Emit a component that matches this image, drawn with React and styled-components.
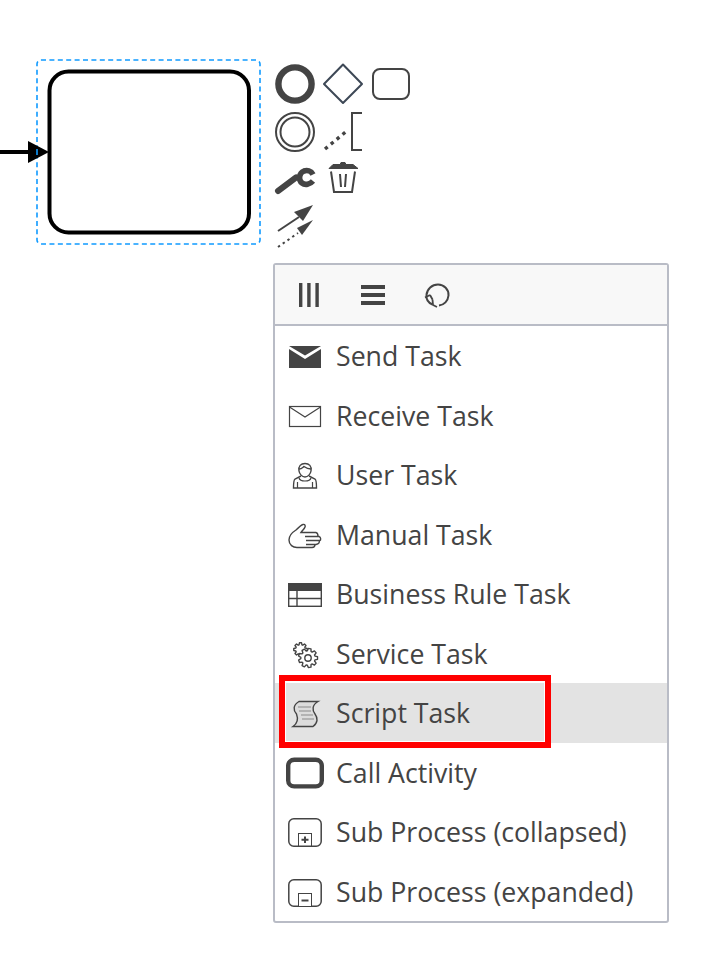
import React from 'react';
import styled, { createGlobalStyle } from 'styled-components';

const GlobalStyle = createGlobalStyle`
  html, body {
    margin: 0;
    background: #fff;
  }
  body {
    font-family: "Open Sans", "Noto Sans", sans-serif;
    color: #444;
  }
`;

const Page = styled.div`
  width: 703px;
  height: 961px;
  overflow: hidden;
`;

const Stage = styled.div`
  display: flex;
  align-items: flex-start;
  height: 263px;
`;

const Diagram = styled.svg`
  display: block;
  flex: none;
  width: 271px;
  height: 263px;
`;

const ContextPad = styled.div`
  display: grid;
  grid-template-columns: repeat(3, 48px);
  grid-auto-rows: 48px;
  margin-top: 60px;
`;

const PadIcon = styled.svg`
  display: block;
  width: 48px;
  height: 48px;
  color: #444;
`;

const Menu = styled.div`
  box-sizing: border-box;
  width: 396px;
  margin-left: 273px;
  border: 2px solid #b9bcc6;
  border-radius: 3px;
  background: #fff;
`;

const MenuHeader = styled.div`
  display: flex;
  align-items: center;
  height: 59px;
  padding-left: 14px;
  gap: 24px;
  background: #f8f8f8;
  border-bottom: 2px solid #b9bcc6;
`;

const HeaderIcon = styled.svg`
  display: block;
  width: 40px;
  height: 40px;
  color: #444;
`;

const Row = styled.div`
  position: relative;
  display: flex;
  align-items: center;
  gap: 11px;
  height: 59.5px;
  padding-left: 10px;
  font-size: 26.7px;
  white-space: nowrap;
  background: ${(p) => (p.$active ? '#e3e3e3' : 'transparent')};
`;

const RowIcon = styled.svg`
  display: block;
  flex: none;
  width: 40px;
  height: 40px;
  color: #444;
`;

const Callout = styled.div`
  position: absolute;
  left: 4px;
  top: -8px;
  width: 272px;
  height: 73px;
  box-sizing: border-box;
  border: 6px solid #ff0000;
  box-shadow: inset 0 0 0 1px #fff;
`;

function gearPath(cx, cy, outer, inner, teeth) {
  const step = (Math.PI * 2) / teeth;
  const pts = [];
  for (let i = 0; i < teeth; i++) {
    const a = i * step;
    const at = (r, o) => `${(cx + r * Math.cos(a + o)).toFixed(2)} ${(cy + r * Math.sin(a + o)).toFixed(2)}`;
    pts.push(at(inner, -step * 0.38), at(outer, -step * 0.2), at(outer, step * 0.2), at(inner, step * 0.38));
  }
  return `M${pts.join('L')}Z`;
}

const rowBox = { viewBox: '-3 -3 40 40', fill: 'none', stroke: 'currentColor' };

const icons = {
  send: (
    <RowIcon {...rowBox} stroke="none">
      <path d="M1 7H33L17 16.5Z M1 10L17 20L33 10V29H1Z" fill="currentColor" />
    </RowIcon>
  ),
  receive: (
    <RowIcon {...rowBox} strokeWidth="1.2">
      <rect x="1.5" y="8.5" width="31" height="20" />
      <path d="M1.5 9L17 19L32.5 9" />
    </RowIcon>
  ),
  user: (
    <RowIcon {...rowBox} strokeWidth="1.4">
      <path d="M11 13C10 8 13 5.5 17 5.5C21 5.5 24 8 23 13C22.5 16 20 19 17 19C14 19 11.5 16 11 13Z" />
      <path d="M11 11C14 11 15 9 16 8.5C18 10 21 11 23 11" />
      <path d="M13 18L7 21C5.5 22 5.5 24 5.5 30H28.5C28.5 24 28.5 22 27 21L21 18" />
      <path d="M11 20C12 24 22 24 23 20M9.5 24V30M24.5 24V30" strokeWidth="1.2" />
    </RowIcon>
  ),
  manual: (
    <RowIcon {...rowBox} strokeWidth="1.4">
      <path d="M15 7.5C13 8 10 11 8 13C4 15.5 1 19 1 23C1 28 5 30.5 9 30.5H24" />
      <path d="M15 7.5C17 7 18 9 16.5 11C15.5 12.5 14 14 13 15.5H28" />
      <path d="M17 19.5H31.5M18 23.5H32M18 27.5H28M28 15.5C30 16 30 19 30 19.5M31 19.5C33 20 33 23 32 23.5M31 23.5C32 25 31 27 28 27.5M24 30.5C26 30.5 27 29 27 27.5" />
    </RowIcon>
  ),
  rule: (
    <RowIcon {...rowBox} strokeWidth="1.4">
      <rect x="0.5" y="6" width="33" height="8" fill="currentColor" stroke="none" />
      <rect x="0.7" y="6.7" width="32.6" height="22.6" />
      <path d="M0.7 21.5H33.3M9 14V29.3" />
    </RowIcon>
  ),
  service: (
    <RowIcon {...rowBox} strokeWidth="1.4" strokeLinejoin="round">
      <path d={gearPath(12.5, 13.5, 6.8, 4.9, 8)} />
      <path d={gearPath(20, 22, 9.6, 7.2, 9)} fill="#fff" />
      <circle cx="20" cy="22" r="3.2" />
    </RowIcon>
  ),
  script: (
    <RowIcon {...rowBox} strokeWidth="1.4">
      <path d="M11 5.5H30C24 9 24 14 27 18C30 22 30 27 25 30.5H5C10 27 10 22 8.5 18C5 14 5 9 11 5.5Z" fill="#dcdcdc" />
      <path d="M10 11H23M11 15H23M13 19H25M14 23H26" stroke="#8a8a8a" strokeWidth="1" />
    </RowIcon>
  ),
  call: (
    <RowIcon {...rowBox} strokeWidth="4.4">
      <rect x="0.2" y="4.8" width="33.6" height="26.6" rx="6" />
    </RowIcon>
  ),
  collapsed: (
    <RowIcon {...rowBox} strokeWidth="1.5">
      <rect x="0.8" y="3.8" width="32.4" height="27.4" rx="5" />
      <rect x="10.5" y="18.5" width="13" height="12.5" strokeWidth="1" fill="#fff" />
      <path d="M13.5 24.8H20.5M17 21.5V28" strokeWidth="2" />
    </RowIcon>
  ),
  expanded: (
    <RowIcon {...rowBox} strokeWidth="1.5">
      <rect x="0.8" y="5.8" width="32.4" height="26.4" rx="5" />
      <rect x="10.5" y="19.5" width="13" height="13" strokeWidth="1" fill="#fff" />
      <path d="M13.5 26.5H20.5" strokeWidth="2" />
    </RowIcon>
  ),
};

const rows = [
  { key: 'send', label: 'Send Task' },
  { key: 'receive', label: 'Receive Task' },
  { key: 'user', label: 'User Task' },
  { key: 'manual', label: 'Manual Task' },
  { key: 'rule', label: 'Business Rule Task' },
  { key: 'service', label: 'Service Task' },
  { key: 'script', label: 'Script Task', active: true },
  { key: 'call', label: 'Call Activity' },
  { key: 'collapsed', label: 'Sub Process (collapsed)' },
  { key: 'expanded', label: 'Sub Process (expanded)' },
];

const padBox = { viewBox: '0 0 48 48', fill: 'none', stroke: 'currentColor' };

function Pad() {
  return (
    <ContextPad>
      <PadIcon {...padBox} strokeWidth="6.4">
        <circle cx="24" cy="24" r="16.6" />
      </PadIcon>
      <PadIcon {...padBox} strokeWidth="2" strokeLinejoin="round" stroke="#3d4856">
        <path d="M24 4.5L43 24L24 43L5 24Z" />
      </PadIcon>
      <PadIcon {...padBox} strokeWidth="2">
        <rect x="6" y="9" width="36" height="30" rx="7" />
      </PadIcon>

      <PadIcon {...padBox} strokeWidth="2">
        <circle cx="24" cy="24" r="19" />
        <circle cx="24" cy="24" r="14.5" />
      </PadIcon>
      <PadIcon {...padBox}>
        <path d="M6 41L29 22" strokeWidth="3.4" strokeDasharray="3.4 4.2" />
        <path d="M43 5H33V42H43" strokeWidth="2" />
      </PadIcon>
      <span />

      <PadIcon {...padBox} strokeLinecap="round">
        <path d="M7 35L25 21.5" strokeWidth="6" />
        <path d="M42 18.5C40 14.5 36 14 33 15C28 17 27 24 31 27C34 29.5 39 28.5 42 25" strokeWidth="5.6" strokeLinecap="butt" />
      </PadIcon>
      <PadIcon {...padBox}>
        <path d="M10 12.5H39L34 8.5H27L26 6.5H22L21 8.5H14Z" fill="currentColor" stroke="currentColor" strokeWidth="1" strokeLinejoin="round" />
        <path d="M12 15.5L15 36H33L36 15.5" strokeWidth="2" />
        <path d="M21 18L22 31M27 18L26 31" strokeWidth="2" />
      </PadIcon>
      <span />

      <PadIcon {...padBox}>
        <path d="M7 27L28 13" strokeWidth="2" />
        <path d="M23 8L42 1L32 17Z" fill="currentColor" stroke="none" />
        <path d="M7 43L27 29" strokeWidth="2" strokeDasharray="2.4 3.4" />
        <path d="M26 24L42 16L31 31Z" fill="currentColor" stroke="none" />
      </PadIcon>
    </ContextPad>
  );
}

export default function App() {
  return (
    <Page>
      <GlobalStyle />
      <Stage>
        <Diagram viewBox="0 0 271 263" fill="none">
          <rect x="37" y="60" width="223" height="184" rx="4" stroke="#0f9aff" strokeWidth="1.6" strokeDasharray="5 3.4" />
          <rect x="49.5" y="71.5" width="199.5" height="161" rx="19" fill="#fff" stroke="#000" strokeWidth="4" />
          <path d="M0 152H30" stroke="#000" strokeWidth="4" />
          <path d="M28 141L49 152L28 163Z" fill="#000" />
          <path d="M37 149V155" stroke="#0f9aff" strokeWidth="1.6" />
        </Diagram>
        <Pad />
      </Stage>
      <Menu>
        <MenuHeader>
          <HeaderIcon viewBox="0 0 40 40" fill="currentColor">
            <path d="M10 8H13.4V32H10ZM18.2 8H21.6V32H18.2ZM26.4 8H29.8V32H26.4Z" />
          </HeaderIcon>
          <HeaderIcon viewBox="0 0 40 40" fill="currentColor">
            <path d="M8 10H32V14H8ZM8 18H32V22H8ZM8 26H32V30H8Z" />
          </HeaderIcon>
          <HeaderIcon viewBox="0 0 40 40" fill="none" stroke="currentColor" strokeWidth="2">
            <path d="M15.5 29.5C11 27.5 9 24 9.5 20C10 14 15 9.5 21 9.5C27 9.5 32 14.5 31.5 20.5C31 26 27 30 22 30.5" />
            <path d="M8 22.5L13 20M13 20L15.5 24.5M15.5 24.5L16 30L20 32" strokeWidth="1.8" />
          </HeaderIcon>
        </MenuHeader>
        {rows.map((row) => (
          <Row key={row.key} $active={row.active}>
            {icons[row.key]}
            <span>{row.label}</span>
            {row.active && <Callout />}
          </Row>
        ))}
      </Menu>
    </Page>
  );
}
